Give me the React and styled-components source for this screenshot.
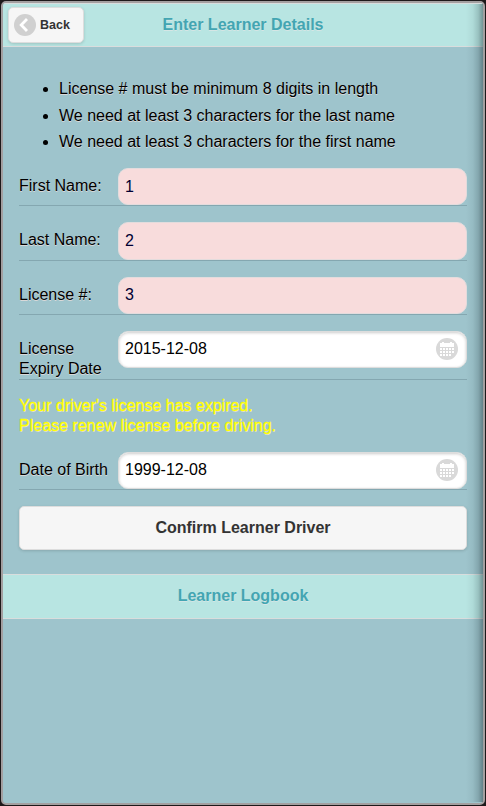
import React from "react";
import styled, { createGlobalStyle } from "styled-components";

const GlobalStyle = createGlobalStyle`
  * { box-sizing: border-box; }
  body { margin: 0; background: #1d191a; overflow: hidden; }
  button, input { font: inherit; }
`;

const Device = styled.main`
  position: relative;
  width: 486px;
  height: 806px;
  border: 1px solid #1d191a;
  background: #1d191a;
  font: 16px/20px "Liberation Sans", Arial, sans-serif;
  color: #000;
  text-shadow: 0 1px 0 #d9d9d9;
`;

const Screen = styled.div`
  height: 804px;
  border: 2px solid #a39fa0;
  border-radius: 5px;
  background: #9ec4cc;
  overflow: hidden;
`;

const EdgeShade = styled.div`
  position: absolute;
  top: 3px;
  right: 2px;
  bottom: 3px;
  width: 17px;
  pointer-events: none;
  background: linear-gradient(to right, transparent, rgba(0, 20, 25, 0.05) 40%, rgba(0, 20, 25, 0.17) 72%, rgba(0, 20, 25, 0.38));
`;

const Bar = styled.header`
  position: relative;
  display: flex;
  align-items: center;
  justify-content: center;
  height: ${(p) => p.$height}px;
  border: solid #d9dddd;
  border-width: 1px 0;
  background: #b8e5e2;
`;

const BarTitle = styled.h1`
  margin: 0;
  font-size: 16px;
  line-height: 20px;
  color: #43a5b2;
  text-shadow: 0 1px 0 #d5e6e5;
  padding-bottom: 1px;
`;

const BackButton = styled.button`
  position: absolute;
  left: 5px;
  top: 3px;
  display: flex;
  align-items: center;
  gap: 4px;
  width: 76px;
  height: 36px;
  padding: 0 0 0 5px;
  border: 1px solid #ddd;
  border-radius: 5px;
  background: #f6f6f6;
  box-shadow: 0 1px 3px rgba(0, 0, 0, 0.15);
  color: #333;
  font-size: 12.5px;
  font-weight: bold;
  text-shadow: 0 1px 0 #f3f3f3;
`;

const Content = styled.section`
  height: 527px;
  padding: 29px 16px 0;
`;

const Errors = styled.ul`
  margin: 0 0 12px;
  padding-left: 40px;
  line-height: 26.6px;
`;

const Field = styled.div`
  display: flex;
  height: ${(p) => p.$height}px;
  margin-bottom: ${(p) => p.$gap}px;
  border-bottom: 1px solid #84a7b0;
`;

const Label = styled.label`
  width: 99px;
  padding-top: 8px;
  flex: none;
`;

const InputBox = styled.div`
  display: flex;
  align-items: flex-start;
  width: 349px;
  height: ${(p) => p.$height}px;
  padding: 6px 8px 0 6px;
  border: 1px solid ${(p) => (p.$invalid ? "#e3dcdd" : "#ddd")};
  border-radius: 10px;
  background: ${(p) => (p.$invalid ? "#f8dcdc" : "#fff")};
  box-shadow: ${(p) => (p.$invalid ? "none" : "inset 0 1px 3px rgba(0, 0, 0, 0.2)")};
`;

const Input = styled.input`
  flex: 1;
  min-width: 0;
  height: 20px;
  margin-top: ${(p) => p.$inset}px;
  padding: 0;
  border: 0;
  outline: 0;
  background: transparent;
  color: ${(p) => (p.$invalid ? "#000033" : "#000")};
  text-shadow: none;
`;

const Notice = styled.p`
  height: 56px;
  margin: 0;
  color: #ff0;
  -webkit-text-stroke: 0.3px #ff0;
`;

const ConfirmButton = styled.button`
  display: block;
  width: 448px;
  height: 44px;
  padding: 1px 0 0;
  border: 1px solid #ddd;
  border-radius: 5px;
  background: #f6f6f6;
  box-shadow: 0 1px 3px rgba(0, 0, 0, 0.15);
  color: #333;
  font-weight: bold;
  text-shadow: 0 1px 0 #f3f3f3;
`;

function BackIcon() {
  return (
    <svg width="22" height="22" viewBox="0 0 22 22">
      <circle cx="11" cy="11" r="11" fill="#d0d0d0" />
      <path d="M13 5 7.2 11l5.8 6" fill="none" stroke="#fff" strokeWidth="2.8" />
    </svg>
  );
}

const gridRows = [
  { y: 10, cols: [0, 1, 2, 3, 4] },
  { y: 13, cols: [0, 1, 2, 3, 4] },
  { y: 16, cols: [0, 1, 2, 3] },
];

function CalendarIcon() {
  return (
    <svg width="22" height="22" viewBox="0 0 22 22">
      <circle cx="11" cy="11" r="11" fill="#d9d9d9" />
      <path d="M4 5h2V4h2v1h6V4h2v1h2v4H4z" fill="#fff" />
      {gridRows.map(({ y, cols }) =>
        cols.map((c) => <rect key={`${y}-${c}`} x={4 + c * 3} y={y} width="2" height="2" fill="#fff" />)
      )}
    </svg>
  );
}

function FormField({ label, value, invalid, date, height, gap = 16, boxHeight = 37, inset = 1 }) {
  return (
    <Field $height={height} $gap={gap}>
      <Label>{label}</Label>
      <InputBox $invalid={invalid} $height={boxHeight}>
        <Input defaultValue={value} $invalid={invalid} $inset={inset} aria-label={label} />
        {date && <CalendarIcon />}
      </InputBox>
    </Field>
  );
}

export default function App() {
  return (
    <>
      <GlobalStyle />
      <Device>
        <Screen>
          <Bar $height={44}>
            <BackButton><BackIcon />Back</BackButton>
            <BarTitle>Enter Learner Details</BarTitle>
          </Bar>
          <Content>
            <Errors>
              <li>License # must be minimum 8 digits in length</li>
              <li>We need at least 3 characters for the last name</li>
              <li>We need at least 3 characters for the first name</li>
            </Errors>
            <FormField label="First Name:" value="1" invalid height={38} inset={2} />
            <FormField label="Last Name:" value="2" invalid height={39} boxHeight={38} inset={2} />
            <FormField label="License #:" value="3" invalid height={38} />
            <FormField label="License Expiry Date" value="2015-12-08" date height={49} />
            <Notice>Your driver's license has expired.<br />Please renew license before driving.</Notice>
            <FormField label="Date of Birth" value="1999-12-08" date height={38} />
            <ConfirmButton>Confirm Learner Driver</ConfirmButton>
          </Content>
          <Bar as="footer" $height={45}>
            <BarTitle>Learner Logbook</BarTitle>
          </Bar>
        </Screen>
        <EdgeShade />
      </Device>
    </>
  );
}
